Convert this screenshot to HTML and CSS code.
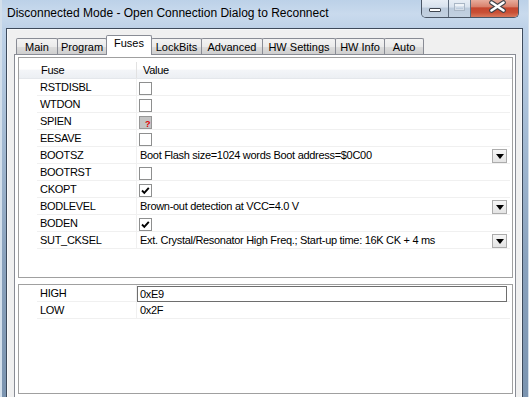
FILE: index.html
```html
<!DOCTYPE html>
<html lang="en">
<head>
    <meta charset="UTF-8">
    <title>Fuses</title>
    <link rel="stylesheet" href="styles.css">
</head>
<body>
    <div class="window">
        <div class="titlebar">
            <span class="title">Disconnected Mode - Open Connection Dialog to Reconnect</span>
            <div class="caption">
                <span class="cap cap-min"><span class="min-glyph"></span></span>
                <span class="cap cap-max"><span class="max-glyph"></span></span>
                <span class="cap cap-close">
                    <svg width="47" height="17" viewBox="0 0 47 17">
                        <path d="M20.5 3.5 L32.5 11.5 M32.5 3.5 L20.5 11.5" stroke="#3b3f46" stroke-width="4.6" stroke-linecap="round"/>
                        <path d="M20.5 3.5 L32.5 11.5 M32.5 3.5 L20.5 11.5" stroke="#ffffff" stroke-width="2.6" stroke-linecap="round"/>
                    </svg>
                </span>
            </div>
        </div>
        <div class="client">
            <div class="tabs">
                <span class="tab w-main">Main</span>
                <span class="tab w-program">Program</span>
                <span class="tab selected w-fuses">Fuses</span>
                <span class="tab w-lockbits">LockBits</span>
                <span class="tab w-advanced">Advanced</span>
                <span class="tab w-hwsettings">HW Settings</span>
                <span class="tab w-hwinfo">HW Info</span>
                <span class="tab w-auto">Auto</span>
            </div>
            <div class="page">
                <div class="listbox fuse-box">
                    <div class="head">
                        <span class="head-name">Fuse</span>
                        <span class="head-val">Value</span>
                    </div>
                    <div class="row"><span class="name">RSTDISBL</span><span class="val"><span class="check"></span></span></div>
                    <div class="row"><span class="name">WTDON</span><span class="val"><span class="check"></span></span></div>
                    <div class="row"><span class="name">SPIEN</span><span class="val"><span class="check unknown"><span class="qmark">?</span></span></span></div>
                    <div class="row"><span class="name">EESAVE</span><span class="val"><span class="check"></span></span></div>
                    <div class="row"><span class="name">BOOTSZ</span><span class="val"><span class="val-text">Boot Flash size=1024 words Boot address=$0C00</span><span class="drop"><span class="arrow"></span></span></span></div>
                    <div class="row"><span class="name">BOOTRST</span><span class="val"><span class="check"></span></span></div>
                    <div class="row"><span class="name">CKOPT</span><span class="val"><span class="check"><svg width="11" height="11" viewBox="0 0 11 11"><path d="M2 5.5 L4.3 7.8 L8.8 2.8" fill="none" stroke="#000" stroke-width="1.9"/></svg></span></span></div>
                    <div class="row"><span class="name">BODLEVEL</span><span class="val"><span class="val-text">Brown-out detection at VCC=4.0 V</span><span class="drop"><span class="arrow"></span></span></span></div>
                    <div class="row"><span class="name">BODEN</span><span class="val"><span class="check"><svg width="11" height="11" viewBox="0 0 11 11"><path d="M2 5.5 L4.3 7.8 L8.8 2.8" fill="none" stroke="#000" stroke-width="1.9"/></svg></span></span></div>
                    <div class="row"><span class="name">SUT_CKSEL</span><span class="val"><span class="val-text">Ext. Crystal/Resonator High Freq.; Start-up time: 16K CK + 4 ms</span><span class="drop"><span class="arrow"></span></span></span></div>
                </div>
                <div class="listbox value-box">
                    <div class="row"><span class="name">HIGH</span><span class="val editing"><span class="edit">0xE9</span></span></div>
                    <div class="row"><span class="name">LOW</span><span class="val"><span class="val-text">0x2F</span></span></div>
                </div>
            </div>
        </div>
    </div>
</body>
</html>
```

FILE: styles.css
```css
* {
    box-sizing: border-box;
}
body {
    margin: 0;
    width: 529px;
    height: 397px;
    overflow: hidden;
    font-family: "Liberation Sans", Arial, sans-serif;
    font-size: 11px;
    color: #000;
}
.window {
    height: 397px;
    display: flex;
    flex-direction: column;
    padding: 0 7px;
    background: linear-gradient(180deg, #bcd1e8 0px, #c9daed 14px, #bed2e8 28px, #a3bad3 140px, #8aa2bd 260px, #7b94b0 397px);
    box-shadow: inset 2px 0 0 #d3dfeb, inset -1px 0 0 #d3dfeb;
}
.titlebar {
    height: 29px;
    display: flex;
    align-items: flex-start;
}
.title {
    margin-top: 5px;
    font-size: 12px;
    line-height: 16px;
    color: #000;
    white-space: nowrap;
}
.caption {
    display: flex;
    margin: -1px 3px 0 auto;
    height: 19px;
    border: 1px solid #4a5666;
    border-top: none;
    border-radius: 0 0 5px 5px;
    overflow: hidden;
}
.cap {
    display: block;
    height: 18px;
    position: relative;
}
.cap-min {
    width: 27px;
    border-right: 1px solid #5d6b7c;
    background: linear-gradient(180deg, #e9eff6 0%, #d8e2ee 45%, #bccbdc 50%, #c3d1e1 100%);
}
.cap-max {
    width: 22px;
    border-right: 1px solid #5d6b7c;
    background: linear-gradient(180deg, #e9eff6 0%, #d8e2ee 45%, #bccbdc 50%, #c3d1e1 100%);
}
.cap-close {
    width: 47px;
    background: linear-gradient(180deg, #eab3a4 0%, #d9826d 42%, #c5462e 50%, #c95036 75%, #d9785c 100%);
}
.min-glyph {
    position: absolute;
    left: 7px;
    top: 9px;
    width: 12px;
    height: 4px;
    background: #fff;
    border: 1px solid #3f4650;
    border-radius: 1px;
}
.max-glyph {
    position: absolute;
    left: 5px;
    top: 4px;
    width: 11px;
    height: 8px;
    border: 1px solid #a9b6c5;
    box-shadow: inset 0 2px 0 #eef3f8, inset 0 0 0 1px #d4dde8;
}
.client {
    flex: 1;
    display: flex;
    flex-direction: column;
    background: #f0f0f0;
    border: 1px solid #f7f9fb;
    border-bottom: none;
    box-shadow: 0 0 0 1px #3d4a5b;
}
.tabs {
    height: 24px;
    display: flex;
    align-items: flex-end;
    padding-left: 8px;
}
.tab {
    height: 16px;
    margin-left: -1px;
    padding-top: 2px;
    line-height: 13px;
    text-align: center;
    border: 1px solid #898c95;
    border-bottom: none;
    border-radius: 2px 2px 0 0;
    background: linear-gradient(180deg, #f3f3f3 0%, #ebebeb 50%, #dddddd 51%, #cfcfcf 100%);
}
.tab.selected {
    height: 20px;
    margin-bottom: -1px;
    padding-top: 1px;
    position: relative;
    z-index: 1;
    background: #fff;
}
.w-main { width: 42px; margin-left: 0; }
.w-program { width: 50px; }
.w-fuses { width: 46px; }
.w-lockbits { width: 51px; }
.w-advanced { width: 62px; }
.w-hwsettings { width: 74px; }
.w-hwinfo { width: 50px; }
.w-auto { width: 40px; }
.page {
    flex: 1;
    margin: 0 5px 0 6px;
    padding: 2px 2px 0 3px;
    background: #fff;
    border: 1px solid #898c95;
    border-bottom: none;
}
.listbox {
    border: 1px solid #a0a0a0;
    background: #fff;
    letter-spacing: -0.3px;
}
.fuse-box {
    height: 221px;
    padding-top: 4px;
}
.value-box {
    height: 110px;
    margin-top: 6px;
}
.head {
    display: grid;
    grid-template-columns: 118px 1fr;
    height: 17px;
    line-height: 16px;
    background: linear-gradient(180deg, #ffffff 0%, #ffffff 45%, #f3f5f8 50%, #eceff3 100%);
    border-bottom: 1px solid #e4e7eb;
}
.head-name {
    padding-left: 22px;
    border-right: 1px solid #e2e2e2;
}
.head-val {
    padding-left: 6px;
}
.row {
    display: grid;
    grid-template-columns: 100px 1fr;
    height: 17px;
    margin: 0 2px 0 18px;
    border-bottom: 1px solid #f0f0f0;
}
.name {
    padding-left: 3px;
    line-height: 16px;
    border-right: 1px solid #f0f0f0;
    white-space: nowrap;
}
.val {
    display: flex;
    align-items: flex-start;
    padding-left: 2px;
    min-width: 0;
}
.val.editing {
    padding-left: 0;
}
.val-text {
    flex: 1;
    padding-left: 1px;
    line-height: 16px;
    white-space: nowrap;
}
.check {
    position: relative;
    width: 13px;
    height: 13px;
    margin-top: 3px;
    border: 1px solid #8e8f8f;
    background: #fff;
    display: flex;
    align-items: center;
    justify-content: center;
}
.check.unknown {
    background: #c4c4c4;
    border-color: #979797;
}
.qmark {
    position: absolute;
    left: 5px;
    top: 3px;
    font-size: 9px;
    font-weight: bold;
    line-height: 9px;
    color: #e00000;
}
.drop {
    width: 15px;
    height: 14px;
    margin: 2px 3px 0 auto;
    border: 1px solid #acacac;
    background: linear-gradient(180deg, #f6f6f6, #e4e4e4);
    display: flex;
    align-items: center;
    justify-content: center;
}
.arrow {
    width: 0;
    height: 0;
    border-left: 4px solid transparent;
    border-right: 4px solid transparent;
    border-top: 5px solid #000;
}
.edit {
    flex: 1;
    height: 16px;
    margin: 1px 3px 0 0;
    padding-left: 2px;
    line-height: 14px;
    border: 1px solid #6e6e6e;
    background: #fff;
}
```
